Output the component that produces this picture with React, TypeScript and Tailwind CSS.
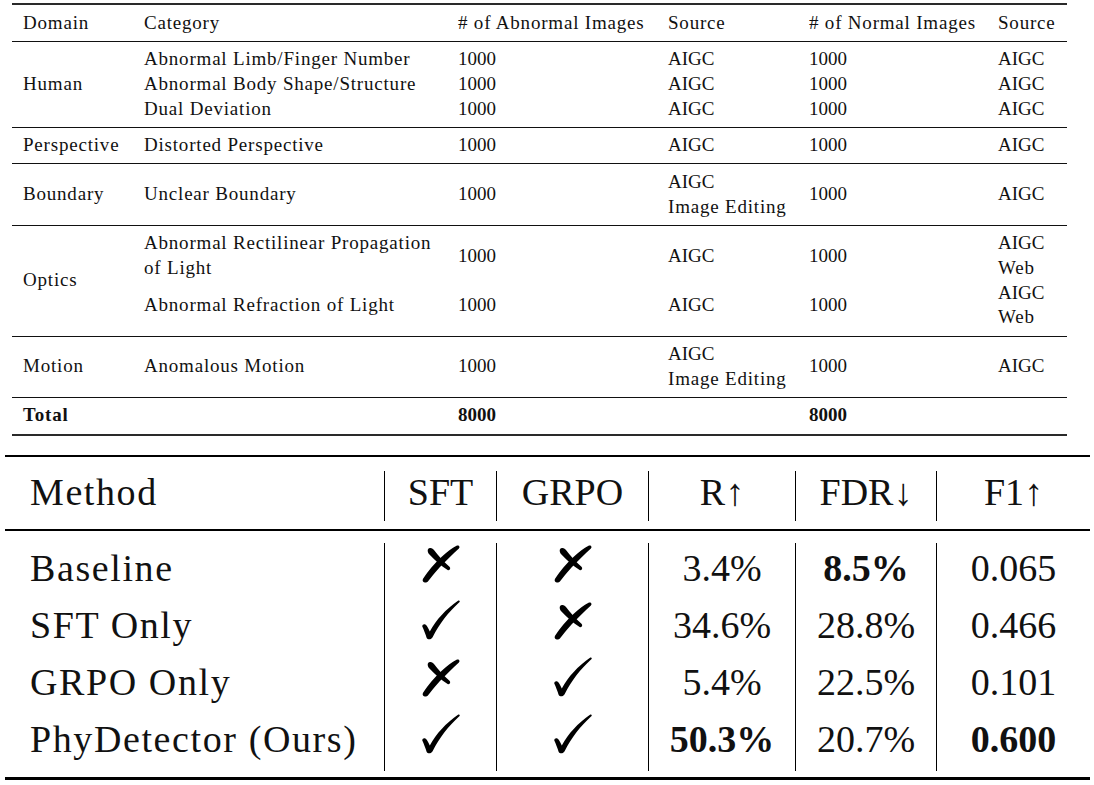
import React from "react";

type Cell = string[];
type SubRow = Cell[];
type Group = { domain: string; bold?: boolean; rows: SubRow[] };

const groups: Group[] = [
  {
    domain: "Human",
    rows: [
      [["Abnormal Limb/Finger Number"], ["1000"], ["AIGC"], ["1000"], ["AIGC"]],
      [["Abnormal Body Shape/Structure"], ["1000"], ["AIGC"], ["1000"], ["AIGC"]],
      [["Dual Deviation"], ["1000"], ["AIGC"], ["1000"], ["AIGC"]],
    ],
  },
  {
    domain: "Perspective",
    rows: [[["Distorted Perspective"], ["1000"], ["AIGC"], ["1000"], ["AIGC"]]],
  },
  {
    domain: "Boundary",
    rows: [[["Unclear Boundary"], ["1000"], ["AIGC", "Image Editing"], ["1000"], ["AIGC"]]],
  },
  {
    domain: "Optics",
    rows: [
      [["Abnormal Rectilinear Propagation", "of Light"], ["1000"], ["AIGC"], ["1000"], ["AIGC", "Web"]],
      [["Abnormal Refraction of Light"], ["1000"], ["AIGC"], ["1000"], ["AIGC", "Web"]],
    ],
  },
  {
    domain: "Motion",
    rows: [[["Anomalous Motion"], ["1000"], ["AIGC", "Image Editing"], ["1000"], ["AIGC"]]],
  },
  {
    domain: "Total",
    bold: true,
    rows: [[[""], ["8000"], [""], ["8000"], [""]]],
  },
];

const spans: Record<number, string> = { 1: "row-span-1", 2: "row-span-2", 3: "row-span-3" };

// lowercase text in the original face runs wider than Liberation Serif
const track = (t: string) => (/[a-z]/.test(t) ? "tracking-[0.8px]" : "");

const topCols = "grid grid-cols-[121px_314px_210px_141px_189px_80px]";

function DatasetTable() {
  const head = ["Domain", "Category", "# of Abnormal Images", "Source", "# of Normal Images", "Source"];
  return (
    <div className="mx-[12px] w-[1055px] border-t-2 border-b-2 border-[#2a2a2a] text-[19px] leading-[24.7px] text-[#111]">
      <div className={`${topCols} py-[5.5px]`}>
        {head.map((h, i) => (
          <div key={i} className={`pl-[11px] whitespace-nowrap ${track(h)}`}>
            {h}
          </div>
        ))}
      </div>
      {groups.map((g) => (
        <div key={g.domain} className={`${topCols} border-t border-[#111] py-[5.5px] ${g.bold ? "font-bold" : ""}`}>
          <div className={`${spans[g.rows.length]} flex items-center pl-[11px] ${track(g.domain)}`}>{g.domain}</div>
          {g.rows.map((row, r) =>
            row.map((cell, c) => (
              <div key={`${r}-${c}`} className="flex flex-col justify-center pl-[11px] whitespace-nowrap">
                {cell.map((line, k) => (
                  <div key={k} className={`h-[24.7px] ${track(line)}`}>
                    {line}
                  </div>
                ))}
              </div>
            ))
          )}
        </div>
      ))}
    </div>
  );
}

// pifont-style ballot X: long brush stroke up to the right, short one from the top left
function Cross() {
  return (
    <svg width="38" height="38" viewBox="0 0 38 38" className="inline-block align-[-2px]">
      <path
        d="M3 37.5C0.8 37.5 0 35.5 1.2 33.6C6 26 12 19 20 11.5C25 7 30 3 34.5 0.8C36.8 -0.2 38.4 1.6 36.9 3.4C31 9 24 15.5 17.5 22.5C12.5 28 9 32.5 6.3 36C5.5 37 4.4 37.5 3 37.5Z"
        fill="#000"
      />
      <path
        d="M7.2 3.2C9.4 2.6 11 3.6 12.4 5.6C16 10.5 21 16 27.5 21.8C28.8 23 28.2 25.6 26 25.2C19 21 12.5 15 7.2 9.2C5.2 7 5.2 3.8 7.2 3.2Z"
        fill="#000"
      />
    </svg>
  );
}

function Check() {
  return (
    <svg width="38" height="40" viewBox="0 0 38 40" className="inline-block align-[-2px]">
      <path
        d="M0.3 26.5C0 24.8 1.8 23.6 3.4 24.4C5 25.3 6.4 28.4 7.8 31.6C14 20 24 9 36 0.8C37.3 0 38.4 1.2 37.3 2.3C26 12.5 17.5 24 10.6 37.3C9.5 39.6 5.7 40.2 4.6 37.8C3.4 33.8 1.8 29.8 0.3 26.5Z"
        fill="#000"
      />
    </svg>
  );
}

type Key = "sft" | "grpo" | "r" | "fdr" | "f1";

const methods: { name: string; sft: boolean; grpo: boolean; r: string; fdr: string; f1: string; bold: Key[] }[] = [
  { name: "Baseline", sft: false, grpo: false, r: "3.4%", fdr: "8.5%", f1: "0.065", bold: ["fdr"] },
  { name: "SFT Only", sft: true, grpo: false, r: "34.6%", fdr: "28.8%", f1: "0.466", bold: [] },
  { name: "GRPO Only", sft: false, grpo: true, r: "5.4%", fdr: "22.5%", f1: "0.101", bold: [] },
  { name: "PhyDetector (Ours)", sft: true, grpo: true, r: "50.3%", fdr: "20.7%", f1: "0.600", bold: ["r", "f1"] },
];

const botCols = "grid grid-cols-[379px_112px_152px_147px_141px_154px]";

function AblationTable() {
  const heads = ["SFT", "GRPO", "R↑", "FDR↓", "F1↑"];
  const keys: Key[] = ["sft", "grpo", "r", "fdr", "f1"];
  return (
    <div className="mx-[5px] mt-[19px] w-[1085px] border-t-2 border-b-[3px] border-black text-[38px] text-[#111]">
      <div className={`${botCols} pt-[14px] pb-[8px]`}>
        <div className="h-[50px] pl-[25px] leading-[42px] tracking-[1.6px]">Method</div>
        {heads.map((h) => (
          <div key={h} className="h-[50px] border-l border-black text-center leading-[42px]">
            {h}
          </div>
        ))}
      </div>
      <div className={`${botCols} border-t-2 border-black pt-[12px] pb-[6px]`}>
        <div className="pl-[25px]">
          {methods.map((m) => (
            <div key={m.name} className="h-[57px] whitespace-nowrap leading-[50px] tracking-[1.6px]">
              {m.name}
            </div>
          ))}
        </div>
        {keys.map((key) => (
          <div key={key} className="border-l border-black text-center">
            {methods.map((m) => {
              const v = m[key];
              return (
                <div key={m.name} className={`h-[57px] leading-[50px] ${m.bold.includes(key) ? "font-bold" : ""}`}>
                  {typeof v === "boolean" ? v ? <Check /> : <Cross /> : v}
                </div>
              );
            })}
          </div>
        ))}
      </div>
    </div>
  );
}

export default function App() {
  return (
    <div className="h-[785px] w-[1094px] bg-white pt-[3px] font-['Liberation_Serif',serif]">
      <DatasetTable />
      <AblationTable />
    </div>
  );
}
